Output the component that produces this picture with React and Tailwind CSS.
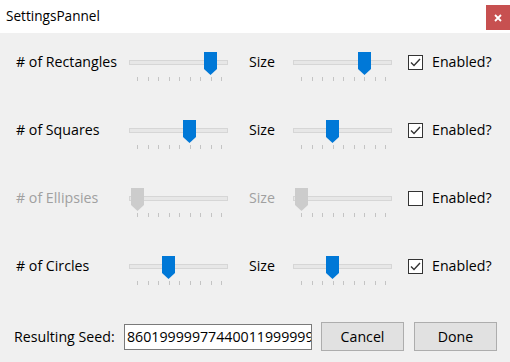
import { useState } from 'react';

const rows = [
  { label: '# of Rectangles', count: 7, size: 6, enabled: true },
  { label: '# of Squares', count: 5, size: 3, enabled: true },
  { label: '# of Ellipsies', count: 0, size: 0, enabled: false },
  { label: '# of Circles', count: 3, size: 3, enabled: true },
];

const TICKS = [0, 1, 2, 3, 4, 5, 6, 7, 8];

function Slider({ value, disabled }) {
  // thumb centre sits on tick `value`, ticks are 10.5px apart
  const left = 1.5 + value * 10.5;
  return (
    <div className="relative w-[99px] h-[38px] shrink-0">
      <div className="absolute left-0 top-[15px] w-[99px] h-[5px] bg-[#e7e7e7] border border-[#d6d6d6]" />
      {TICKS.map((t) => (
        <div
          key={t}
          className="absolute top-[32px] w-px h-[4px] bg-[#c4c4c4]"
          style={{ left: 8 + t * 10.5 }}
        />
      ))}
      <svg
        className="absolute top-[7px]"
        style={{ left }}
        width="13"
        height="23"
        viewBox="0 0 13 23"
      >
        <path d="M0 0H13V17L6.5 23L0 17Z" fill={disabled ? '#cccccc' : '#0078d7'} />
      </svg>
    </div>
  );
}

function Checkbox({ checked }) {
  return (
    <div className="w-[15px] h-[15px] border-[1.5px] border-[#333333] bg-white flex items-center justify-center">
      {checked && (
        <svg width="11" height="9" viewBox="0 0 11 9">
          <path d="M1 4.5L4 7.5L10 1" stroke="#333333" strokeWidth="1.4" fill="none" />
        </svg>
      )}
    </div>
  );
}

export default function App() {
  const [seed] = useState('860199999774400119999999');
  return (
    <div
      className="w-[510px] h-[362px] bg-[#f0f0f0] flex flex-col text-[14.2px] text-black overflow-hidden"
      style={{ fontFamily: '"Open Sans", "Noto Sans", sans-serif' }}
    >
      {/* Title bar */}
      <div className="h-[33px] bg-white flex items-start justify-between shrink-0">
        <span className="pl-[6px] pt-[6px] text-[13.6px] leading-[20px]">SettingsPannel</span>
        <div className="mt-[5px] w-[24px] h-[25px] bg-[#c75050] flex items-center justify-center">
          <svg width="8" height="8" viewBox="0 0 8 8">
            <path d="M1 1L7 7M7 1L1 7" stroke="white" strokeWidth="1.8" />
          </svg>
        </div>
      </div>

      {/* Rows */}
      <div className="flex flex-col gap-[34px] pt-[12px] pl-[16px]">
        {rows.map((r) => {
          const dim = r.enabled ? 'text-black' : 'text-[#a0a0a0]';
          return (
            <div key={r.label} className="h-[34px] flex items-center">
              <span className={`w-[113px] shrink-0 ${dim}`}>{r.label}</span>
              <div className="mt-[4px]">
                <Slider value={r.count} disabled={!r.enabled} />
              </div>
              <span className={`ml-[21px] w-[44px] shrink-0 ${dim}`}>Size</span>
              <div className="mt-[4px]">
                <Slider value={r.size} disabled={!r.enabled} />
              </div>
              <div className="ml-[16px]">
                <Checkbox checked={r.enabled} />
              </div>
              <span className="ml-[9px]">Enabled?</span>
            </div>
          );
        })}
      </div>

      {/* Footer */}
      <div className="mt-auto mb-[11px] flex items-center pl-[14px]">
        <span className="w-[110px] shrink-0">Resulting Seed:</span>
        <div className="w-[188px] h-[26px] bg-white border border-[#7a7a7a] overflow-hidden whitespace-nowrap pl-[2px] leading-[24px]">
          {seed}
        </div>
        <button className="ml-[9px] w-[83px] h-[29px] bg-[#e1e1e1] border border-[#adadad]">Cancel</button>
        <button className="ml-[10px] w-[83px] h-[29px] bg-[#e1e1e1] border border-[#adadad]">Done</button>
      </div>
    </div>
  );
}
